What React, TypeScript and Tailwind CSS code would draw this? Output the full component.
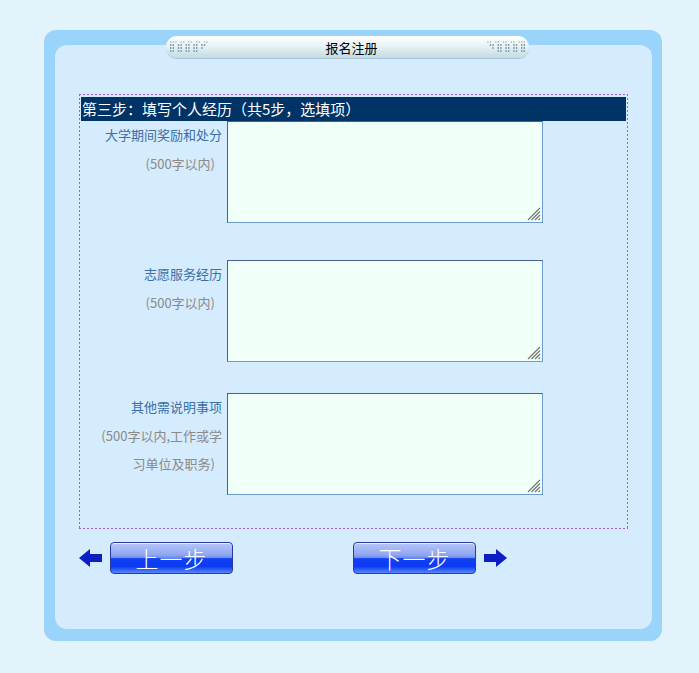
import React from "react";

const FONT = { fontFamily: '"Microsoft YaHei","Noto Sans CJK SC","Noto Sans",sans-serif' };

function Dots({ flip }: { flip?: boolean }) {
  const rects: React.ReactNode[] = [];
  const rows = [
    [0, 1, 2, 4, 5, 7, 8, 10, 11, 13, 14],
    [0, 1, 3, 4, 6, 7, 9, 10, 12, 13],
    [0, 1, 3, 4, 6, 7, 9, 10, 12],
    [0, 1, 3, 4, 6, 7, 9, 10],
  ];
  rows.forEach((cols, r) =>
    cols.forEach((c) =>
      rects.push(
        <rect
          key={`${r}-${c}`}
          x={c * 2.6}
          y={1 + r * 3}
          width={1.4}
          height={2}
          fill={r < 1 ? "#b9cdd6" : "#7f9fb1"}
        />
      )
    )
  );
  return (
    <svg width="40" height="14" viewBox="0 0 40 14" style={flip ? { transform: "scaleX(-1)" } : undefined}>
      {rects}
    </svg>
  );
}

function Arrow({ dir }: { dir: "left" | "right" }) {
  return (
    <svg width="23" height="18" viewBox="0 0 23 18" style={dir === "right" ? { transform: "scaleX(-1)" } : undefined}>
      <polygon points="0,9 11,0 11,5 23,5 23,13 11,13 11,18" fill="#0b1fc4" />
    </svg>
  );
}

function NavButton({ label }: { label: string }) {
  return (
    <div className="relative w-[123px] h-[32px] rounded-[4px] border border-[#2a3aa0] bg-[linear-gradient(to_bottom,#b7c6f8_0%,#8ea6f3_40%,#6b88ee_50%,#1240f2_52%,#0a3af4_78%,#5a86ff_100%)] flex items-center justify-center shadow-[inset_0_1px_0_rgba(255,255,255,0.7)]">
      <span className="text-white text-[23px] leading-none tracking-[1px] font-light" style={FONT}>
        {label}
      </span>
    </div>
  );
}

function Grip() {
  return (
    <svg className="absolute right-[2px] bottom-[2px] pointer-events-none" width="14" height="14" viewBox="0 0 14 14">
      <g stroke="#777" strokeWidth="1.3">
        <line x1="13" y1="1" x2="1" y2="13" />
        <line x1="13" y1="4.5" x2="4.5" y2="13" />
        <line x1="13" y1="8" x2="8" y2="13" />
        <line x1="13" y1="11.5" x2="11.5" y2="13" />
      </g>
    </svg>
  );
}

function Row({
  label,
  sub,
  className = "",
}: {
  label: string;
  sub: React.ReactNode;
  className?: string;
}) {
  return (
    <div className={`flex ${className}`}>
      <div className="w-[146px] pr-[5px] text-right text-[13px] leading-[28.5px]" style={FONT}>
        <div className="text-[#3b6fa8]">{label}</div>
        <div className="text-[#8a8a8a]">{sub}</div>
      </div>
      <div className="relative">
        <textarea className="block w-[316px] h-[102px] resize-none bg-[#f0fff7] border border-t-[#4b5d92] border-l-[#4b5d92] border-r-[#6f9bd6] border-b-[#6f9bd6] outline-none" />
        <Grip />
      </div>
    </div>
  );
}

export default function App() {
  return (
    <div className="min-h-[673px] bg-[#e3f3fc] pt-[30px] pl-[44px]">
      <div className="relative w-[618px] h-[611px] rounded-[12px] bg-[#9ad4fb] pt-[15px] pl-[11px] pr-[10px] pb-[12px]">
        <div className="absolute top-[6px] left-[122px] w-[363px] h-[22px] rounded-full bg-[linear-gradient(to_bottom,#ffffff_0%,#e8f3f5_45%,#c2dbe2_100%)] flex items-center justify-between pl-[4px] pr-[4px] shadow-[0_1px_0_rgba(120,160,180,0.5)]">
          <Dots />
          <span className="text-[13px] text-black leading-none ml-[8px]" style={FONT}>
            报名注册
          </span>
          <Dots flip />
        </div>
        <div className="h-full rounded-[12px] bg-[#d5ebfe] pt-[49px] pl-[24px]">
          <div className="w-[549px] h-[435px] pt-[3px] px-[2px] [background:repeating-linear-gradient(90deg,#a260d6_0_2px,transparent_2px_4px)_top_left/100%_1px_no-repeat,repeating-linear-gradient(90deg,#a260d6_0_2px,transparent_2px_4px)_bottom_left/100%_1px_no-repeat,repeating-linear-gradient(180deg,#a260d6_0_2px,transparent_2px_4px)_top_left/1px_100%_no-repeat,repeating-linear-gradient(180deg,#a260d6_0_2px,transparent_2px_4px)_top_right/1px_100%_no-repeat]">
            <div
              className="h-[24px] bg-[#003366] text-white text-[15px] leading-[24px] pl-[1px] whitespace-nowrap"
              style={FONT}
            >
              第三步：填写个人经历（共5步，选填项）
            </div>
            <Row label="大学期间奖励和处分" sub={<span className="pr-[7px]">(500字以内)</span>} />
            <Row
              className="mt-[37px]"
              label="志愿服务经历"
              sub={<span className="pr-[7px]">(500字以内)</span>}
            />
            <Row
              className="mt-[31px]"
              label="其他需说明事项"
              sub={
                <>
                  <div>(500字以内,工作或学</div>
                  <div className="pr-[7px]">习单位及职务)</div>
                </>
              }
            />
          </div>
          <div className="grid grid-cols-[274px_274px] mt-[13px]">
            <div className="flex items-center">
              <Arrow dir="left" />
              <div className="ml-[8px]">
                <NavButton label="上一步" />
              </div>
            </div>
            <div className="flex items-center">
              <NavButton label="下一步" />
              <div className="ml-[8px]">
                <Arrow dir="right" />
              </div>
            </div>
          </div>
        </div>
      </div>
    </div>
  );
}
